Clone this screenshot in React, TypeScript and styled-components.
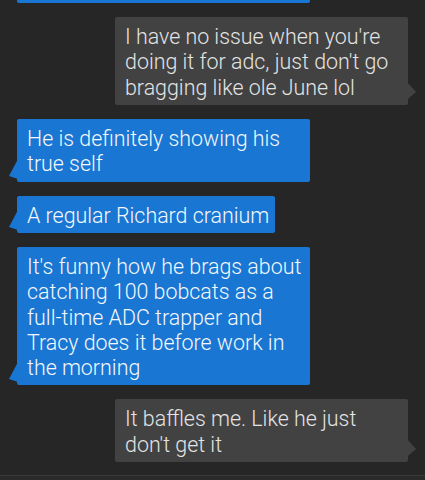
import React from 'react';
import styled, { createGlobalStyle } from 'styled-components';

const GlobalStyle = createGlobalStyle`
  html, body {
    margin: 0;
    padding: 0;
    background: #262626;
  }
  * {
    box-sizing: border-box;
  }
`;

type Side = 'in' | 'out';

const Screen = styled.div`
  width: 425px;
  height: 480px;
  display: flex;
  flex-direction: column;
  background: #262626;
  font-family: Roboto, "Liberation Sans", sans-serif;
  overflow: hidden;
`;

const Thread = styled.div`
  flex: 1;
  min-height: 0;
  display: flex;
  flex-direction: column;
  justify-content: flex-end;
  gap: 14px;
  padding: 0 17px 13px;
  overflow: hidden;
`;

const Row = styled.div<{ side: Side }>`
  display: flex;
  flex-shrink: 0;
  justify-content: ${p => (p.side === 'out' ? 'flex-end' : 'flex-start')};
`;

const Bubble = styled.div<{ side: Side }>`
  position: relative;
  max-width: 293px;
  padding: 7px 6px 5px 10px;
  border-radius: 2px;
  font-size: 21.4px;
  font-weight: 300;
  line-height: 25.3px;
  background: ${p => (p.side === 'out' ? '#424242' : '#1976d2')};
  color: ${p => (p.side === 'out' ? '#e4e4e4' : '#f4f8fc')};
`;

/* the earlier message, scrolled almost out of view */
const ScrolledBubble = styled.div`
  width: 293px;
  height: 60px;
  border-radius: 2px;
  background: #1976d2;
`;

const Tail = styled.svg<{ side: Side }>`
  position: absolute;
  bottom: 3px;
  width: 9px;
  height: 20px;
  ${p => (p.side === 'out' ? 'right: -8px;' : 'left: -8px;')}
`;

const Footer = styled.div`
  height: 5px;
  flex-shrink: 0;
  border-top: 1px solid #383838;
  background: #2a2a2a;
`;

interface Message {
  side: Side;
  text: string;
}

const messages: Message[] = [
  { side: 'out', text: "I have no issue when you're doing it for adc, just don't go bragging like ole June lol" },
  { side: 'in', text: 'He is definitely showing his true self' },
  { side: 'in', text: 'A regular Richard cranium' },
  {
    side: 'in',
    text: "It's funny how he brags about catching 100 bobcats as a full-time ADC trapper and Tracy does it before work in the morning",
  },
  { side: 'out', text: "It baffles me. Like he just don't get it" },
];

function BubbleTail(props: { side: Side }) {
  const { side } = props;
  const fill = side === 'out' ? '#424242' : '#1976d2';
  const points = side === 'out' ? '0,0 9,10 1,17 0,17' : '9,0 0,17 9,20';
  return (
    <Tail side={side} viewBox="0 0 9 20" preserveAspectRatio="none">
      <polygon points={points} fill={fill} />
    </Tail>
  );
}

export default function App() {
  return (
    <Screen>
      <GlobalStyle />
      <Thread>
        <Row side="in">
          <ScrolledBubble />
        </Row>
        {messages.map((m, i) => (
          <Row key={i} side={m.side}>
            <Bubble side={m.side}>
              {m.text}
              <BubbleTail side={m.side} />
            </Bubble>
          </Row>
        ))}
      </Thread>
      <Footer />
    </Screen>
  );
}
